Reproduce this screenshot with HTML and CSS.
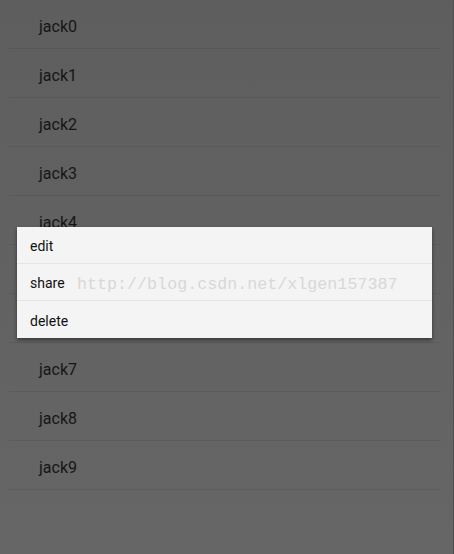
FILE: index.html
```html
<!DOCTYPE html>
<html>
<head>
    <meta name="viewport" content="width=device-width, initial-scale=1.0">
    <link rel="stylesheet" href="styles.css">
</head>
<body>
    <div class="screen">
        <ul class="list">
            <li class="row">jack0</li>
            <li class="row">jack1</li>
            <li class="row">jack2</li>
            <li class="row">jack3</li>
            <li class="row">jack4</li>
            <li class="row">jack5</li>
            <li class="row">jack6</li>
            <li class="row">jack7</li>
            <li class="row">jack8</li>
            <li class="row">jack9</li>
        </ul>

        <div class="menu">
            <div class="menu-item">edit</div>
            <div class="menu-item">share</div>
            <div class="menu-item">delete</div>
            <span class="watermark">http://blog.csdn.net/xlgen157387</span>
        </div>
    </div>
</body>
</html>
```

FILE: styles.css
```css
* {
    margin: 0;
    padding: 0;
    box-sizing: border-box;
}

body {
    width: 454px;
    height: 554px;
    overflow: hidden;
    font-family: Roboto, "Noto Sans", sans-serif;
}

.screen {
    position: relative;
    width: 454px;
    height: 554px;
    background: linear-gradient(180deg, #5e5e5e, #666666);
    border-right: 1px solid #505050;
}

.list {
    list-style: none;
}

.row {
    height: 49px;
    display: flex;
    align-items: center;
    padding-top: 5px;
    padding-left: 30px;
    margin: 0 12px 0 9px;
    font-size: 16px;
    color: #161616;
    border-bottom: 1px solid rgba(0, 0, 0, 0.07);
}

/* context menu dialog */
.menu {
    position: absolute;
    left: 17px;
    top: 227px;
    width: 415px;
    background: #f4f4f4;
    box-shadow: 0 2px 4px rgba(0, 0, 0, 0.45);
}

.menu-item {
    height: 37px;
    display: flex;
    align-items: center;
    padding-top: 2px;
    padding-left: 13px;
    font-size: 14px;
    color: #111;
    border-bottom: 1px solid #e4e4e4;
}

.menu-item:last-of-type {
    border-bottom: none;
}

.watermark {
    position: absolute;
    left: 60px;
    top: 50px;
    line-height: 1;
    font-family: "Liberation Mono", monospace;
    font-size: 16.7px;
    color: #d8d8d8;
    white-space: nowrap;
}
```
